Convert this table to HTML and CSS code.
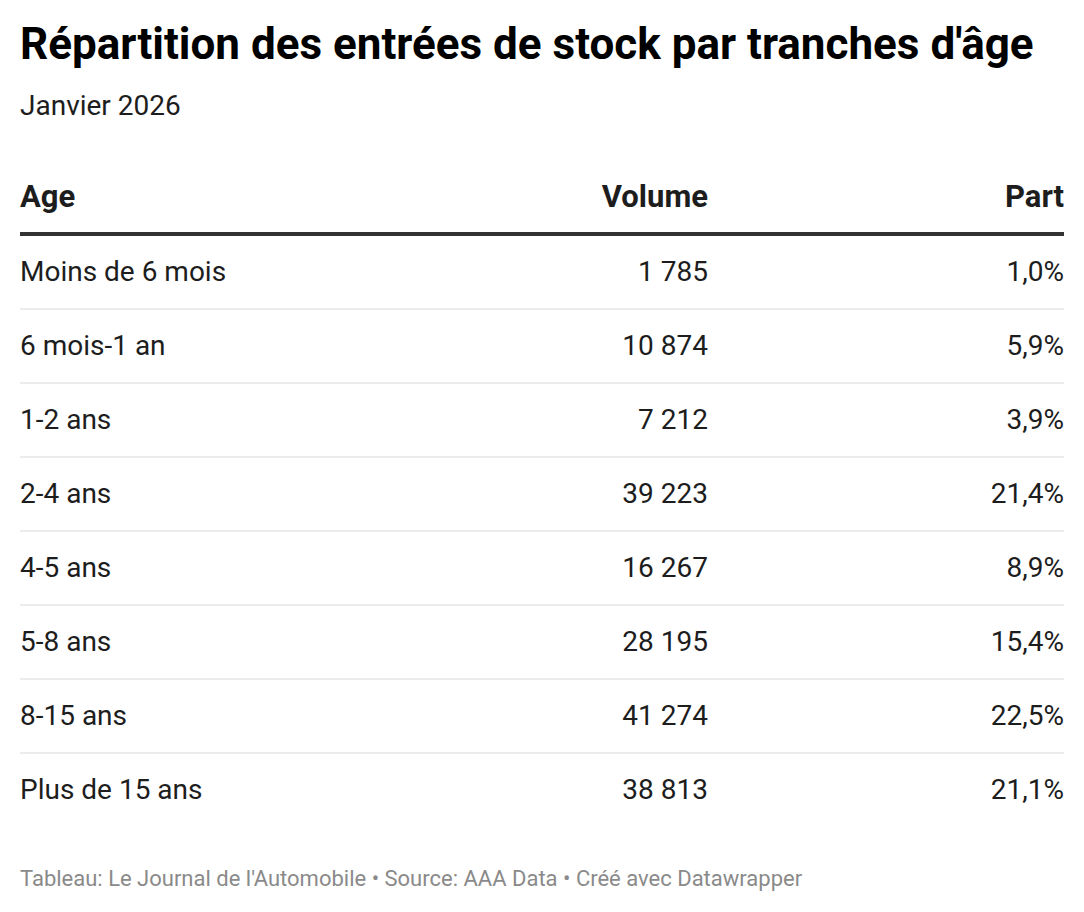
FILE: index.html
```html
<!DOCTYPE html>
<html lang="fr">
<head>
<meta charset="utf-8">
<link rel="stylesheet" href="styles.css">
</head>
<body>
<div class="chart">
  <h1 class="title">Répartition des entrées de stock par tranches d'âge</h1>
  <p class="desc">Janvier 2026</p>
  <table class="tbl">
    <thead>
      <tr><th class="c-age">Age</th><th class="c-vol">Volume</th><th class="c-part">Part</th></tr>
    </thead>
    <tbody>
      <tr><td class="c-age">Moins de 6 mois</td><td class="c-vol">1 785</td><td class="c-part">1,0%</td></tr>
      <tr><td class="c-age">6 mois-1 an</td><td class="c-vol">10 874</td><td class="c-part">5,9%</td></tr>
      <tr><td class="c-age">1-2 ans</td><td class="c-vol">7 212</td><td class="c-part">3,9%</td></tr>
      <tr><td class="c-age">2-4 ans</td><td class="c-vol">39 223</td><td class="c-part">21,4%</td></tr>
      <tr><td class="c-age">4-5 ans</td><td class="c-vol">16 267</td><td class="c-part">8,9%</td></tr>
      <tr><td class="c-age">5-8 ans</td><td class="c-vol">28 195</td><td class="c-part">15,4%</td></tr>
      <tr><td class="c-age">8-15 ans</td><td class="c-vol">41 274</td><td class="c-part">22,5%</td></tr>
      <tr><td class="c-age">Plus de 15 ans</td><td class="c-vol">38 813</td><td class="c-part">21,1%</td></tr>
    </tbody>
  </table>
  <p class="footer">Tableau: Le Journal de l'Automobile • Source: AAA Data • Créé avec Datawrapper</p>
</div>
</body>
</html>
```
FILE: styles.css
```css
html, body {
  margin: 0;
  padding: 0;
  background: #fff;
}
body {
  font-family: Roboto, "Liberation Sans", sans-serif;
  color: #1d1d1d;
}
.chart {
  padding: 18px 20px 0 20px;
}
.title {
  margin: 0;
  font-size: 44px;
  line-height: 53px;
  font-weight: 700;
  color: #000;
}
.desc {
  margin: 17px 0 0 0;
  font-size: 28px;
  line-height: 36px;
  color: #1d1d1d;
}
.tbl {
  width: 100%;
  border-collapse: collapse;
  margin-top: 40px;
  font-size: 28px;
  line-height: 36px;
}
.tbl th {
  font-size: 31px;
  font-weight: 700;
  padding: 15px 0 17px 0;
  vertical-align: bottom;
  border-bottom: 4px solid #333;
  color: #1d1d1d;
}
.tbl td {
  padding: 18px 0;
  border-bottom: 2px solid #ececec;
  vertical-align: middle;
}
.tbl tbody tr:last-child td {
  border-bottom: none;
}
.c-age { text-align: left; }
.c-vol { text-align: right; width: 360px; }
.c-part { text-align: right; width: 356px; }
.footer {
  margin: 38px 0 0 0;
  font-size: 22px;
  line-height: 30px;
  color: #8a8a8a;
}
```
